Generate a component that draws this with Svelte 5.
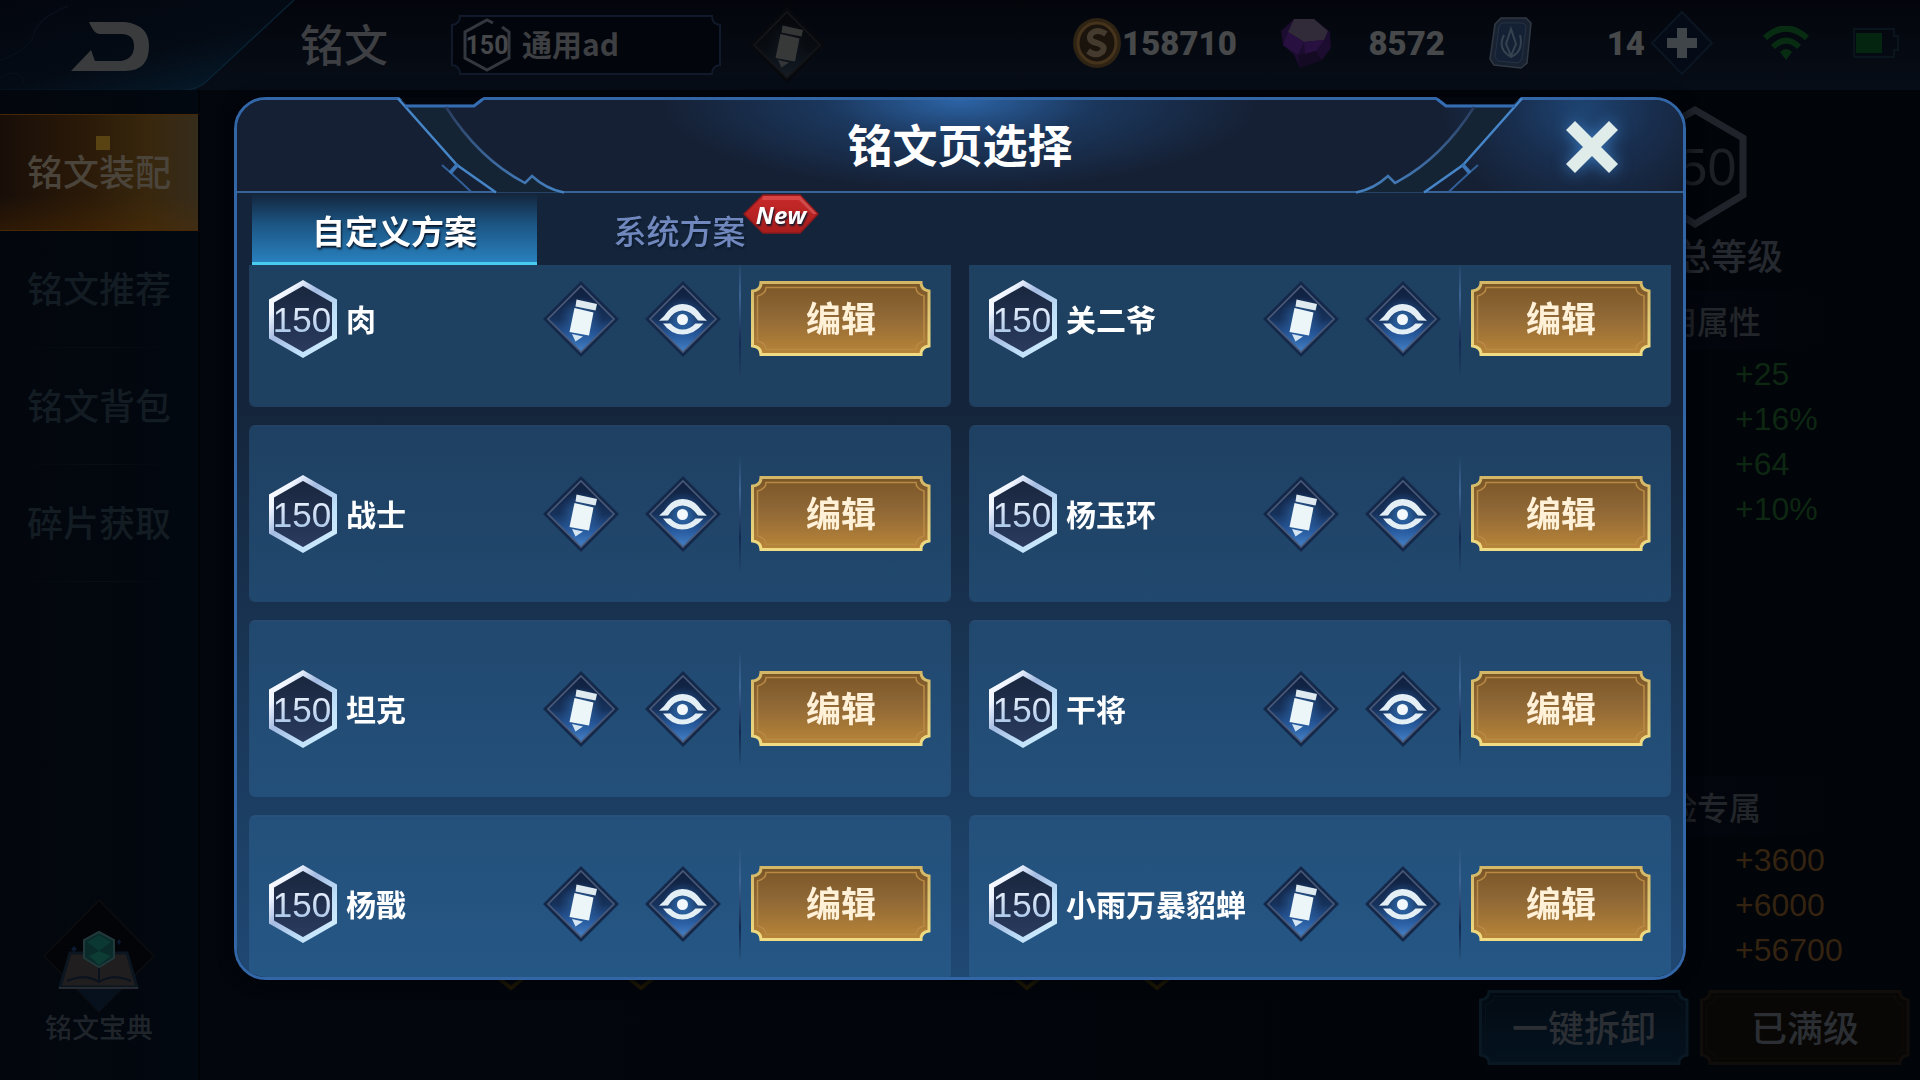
<script>
  import { onMount } from 'svelte';

  const sets = ['肉', '关二爷', '战士', '杨玉环', '坦克', '干将', '杨戬', '小雨万暴貂蝉'];
  const menu = ['铭文装配', '铭文推荐', '铭文背包', '碎片获取'];
  const common = ['+25', '+16%', '+64', '+10%'];
  const adventure = ['+3600', '+6000', '+56700'];

  let active = $state('custom');
  let list;

  onMount(() => {
    list.scrollTop = 35;
  });
</script>

{#snippet pencil()}
  <svg class="diamond" viewBox="0 0 76 76" aria-hidden="true">
    <path d="M38 0 76 38 38 76 0 38Z" fill="#14284a" />
    <path d="M38 5 71 38 38 71 5 38Z" fill="url(#gem)" stroke="#4a5a78" stroke-width="1.6" />
    <circle cx="38" cy="38" r="22" fill="url(#halo)" />
    <path d="M33.500 18.500 54 23 52.500 29.500 32.500 25.500Z" fill="#dfeaf0" />
    <path d="M31.500 27 50.500 31.500 46 54.500 26.500 51Z" fill="#ecf5f8" />
    <path d="M29 53 40 55.500 32.500 60.500Z" fill="#d5e6f2" />
  </svg>
{/snippet}

{#snippet eye()}
  <svg class="diamond" viewBox="0 0 76 76" aria-hidden="true">
    <path d="M38 0 76 38 38 76 0 38Z" fill="#14284a" />
    <path d="M38 5 71 38 38 71 5 38Z" fill="url(#gem)" stroke="#4a5a78" stroke-width="1.6" />
    <circle cx="38" cy="38" r="22" fill="url(#halo)" />
    <path d="M14 39.700Q19 36 23 30Q29 23 37.500 23Q47 23 53 30Q57 36 62 39.700L53 39.500Q46 29.500 37.500 29.500Q29 29.500 23 39.500Z" fill="#e3eef5" />
    <path d="M18 42.500H25.500Q31 48.500 37.500 48.500Q45 48.500 50.500 42.500H58.500Q49 53.500 37.500 53.500Q26 53.500 18 42.500Z" fill="#e3eef5" />
    <circle cx="37.500" cy="38.500" r="5.500" fill="#f2f8fb" />
  </svg>
{/snippet}

{#snippet plate(w, fill, edge, inner)}
  <svg class="plate" viewBox="0 0 {w} 75" preserveAspectRatio="none" aria-hidden="true">
    <path d="M10 1.500H{w - 10}Q{w - 10} 9 {w - 2} 10V65Q{w - 10} 66 {w - 10} 73.500H10Q10 66 1.500 65V10Q10 9 10 1.500Z" {fill} stroke={edge} stroke-width="3" />
    <path d="M15 6.500H{w - 15}Q{w - 15} 13 {w - 7} 15V60Q{w - 15} 62 {w - 15} 68.500H15Q15 62 6.500 60V15Q15 13 15 6.500Z" fill="none" stroke={inner} stroke-width="1.500" />
  </svg>
{/snippet}

{#snippet corner()}
  <path d="M164 -1H251L240 7.500H173Z" fill="#03060d" />
  <path d="M171 10H212Q245 62 291 86L298 79Q312 92 330 95.500H262L223 68Z" fill="#142434" />
  <path d="M164 1.500 223 68 262 95.500" fill="none" stroke="#4585c8" stroke-width="2.500" />
  <path d="M171 9H240L249 2" fill="none" stroke="#356db3" stroke-width="3" />
  <path d="M212 10Q245 62 291 86L298 79Q312 92 330 95.500" fill="none" stroke="url(#curve)" stroke-width="2.500" />
  <path d="M208 68 217 76 238 95.500" fill="none" stroke="#315f96" stroke-width="2" />
  <path d="M216 76 224 67" fill="none" stroke="#3d76b8" stroke-width="4" />
{/snippet}

<svg class="defs" aria-hidden="true">
  <defs>
    <linearGradient id="gem" x1="0" y1="0" x2="0" y2="1">
      <stop offset="0" stop-color="#101f3d" />
      <stop offset=".5" stop-color="#16315a" />
      <stop offset=".75" stop-color="#27599c" />
      <stop offset="1" stop-color="#4582c8" />
    </linearGradient>
    <radialGradient id="halo">
      <stop offset="0" stop-color="#3b82cc" stop-opacity=".8" />
      <stop offset="1" stop-color="#2b64a8" stop-opacity="0" />
    </radialGradient>
    <linearGradient id="rim" x1="0" y1="0" x2="1" y2="1">
      <stop offset="0" stop-color="#ffffff" />
      <stop offset=".2" stop-color="#f0f5ff" />
      <stop offset=".4" stop-color="#a5bbe2" />
      <stop offset=".7" stop-color="#bfe0fa" />
      <stop offset="1" stop-color="#d8f2ff" />
    </linearGradient>
    <linearGradient id="core" x1="0" y1="0" x2="0" y2="1">
      <stop offset="0" stop-color="#18253c" />
      <stop offset="1" stop-color="#2b3c60" />
    </linearGradient>
    <linearGradient id="digits" x1="0" y1="0" x2="0" y2="1">
      <stop offset="0" stop-color="#f6f8ff" />
      <stop offset="1" stop-color="#9fc0e6" />
    </linearGradient>
    <linearGradient id="goldplate" x1="0" y1="0" x2="0" y2="1">
      <stop offset="0" stop-color="#7a5526" />
      <stop offset=".45" stop-color="#8f6836" />
      <stop offset="1" stop-color="#b98538" />
    </linearGradient>
    <linearGradient id="goldedge" x1="0" y1="0" x2="0" y2="1">
      <stop offset="0" stop-color="#d3b766" />
      <stop offset="1" stop-color="#efdc84" />
    </linearGradient>
    <linearGradient id="tealplate" x1="0" y1="0" x2="0" y2="1">
      <stop offset="0" stop-color="#030a12" />
      <stop offset="1" stop-color="#041320" />
    </linearGradient>
    <linearGradient id="curve" x1="0" y1="0" x2="0" y2="1">
      <stop offset="0" stop-color="#2a3c5c" />
      <stop offset="1" stop-color="#4580c0" />
    </linearGradient>
    <linearGradient id="nook" x1="0" y1="0" x2="0.8" y2="1">
      <stop offset="0" stop-color="#03060e" />
      <stop offset=".6" stop-color="#040b15" />
      <stop offset="1" stop-color="#061a2a" />
    </linearGradient>
    <linearGradient id="badge" x1="0" y1="0" x2="0" y2="1">
      <stop offset="0" stop-color="#c92a2a" />
      <stop offset="1" stop-color="#a81c1c" />
    </linearGradient>
  </defs>
</svg>

<div class="scene">
  <header class="topbar">
    <button class="back" aria-label="返回">
      <svg width="300" height="92" viewBox="0 0 300 92">
        <path d="M0 0H294L208 80Q198 90.500 180 90.500H0Z" fill="url(#nook)" />
        <path d="M294 0 208 80Q198 90.500 180 90.500H0" fill="none" stroke="#092233" stroke-width="1.500" />
        <path d="M0 60Q30 50 34 34T68 6M0 78Q20 66 24 84" fill="none" stroke="#070e18" stroke-width="2" />
        <path d="M89 22H125Q149 25 149 46Q149 71 125 71H71L91 50 95 61H121Q134 59 134 46Q134 34 121 34H99Q94 34 89 22Z" fill="#393b3d" />
      </svg>
    </button>
    <h1>铭文</h1>
    <button class="current">
      <svg class="frame" viewBox="0 0 270 60" preserveAspectRatio="none" aria-hidden="true">
        <path d="M9 1H261Q261 9 269 10V50Q261 51 261 59H9Q9 51 1 50V10Q9 9 9 1Z" fill="#02050b" stroke="#111a2b" stroke-width="2" />
      </svg>
      <svg class="mini" viewBox="0 0 50 54" aria-hidden="true">
        <path d="M31 5 25 2 3 14V40L25 52 47 40V14L40 9" fill="none" stroke="#33373f" stroke-width="3" />
        <text x="25" y="36" text-anchor="middle" class="mini-num">150</text>
      </svg>
      <span>通用ad</span>
    </button>
    <button class="dim rename" aria-label="重命名">{@render pencil()}</button>

    <div class="wallet">
      <svg width="50" height="52" viewBox="0 0 50 52" aria-hidden="true">
        <ellipse cx="25" cy="26" rx="24" ry="25" fill="#2f2314" />
        <ellipse cx="25" cy="26" rx="19" ry="20" fill="#1b140d" stroke="#45331c" stroke-width="3" />
        <path d="M34 17Q25 11 19 17Q15 24 25 26Q35 29 30 35Q24 40 16 34" fill="none" stroke="#443a2e" stroke-width="6" />
      </svg>
      <span class="gold-count">158710</span>
      <svg class="gap" width="52" height="52" viewBox="0 0 52 52" aria-hidden="true">
        <path d="M1 14 14 2 34 2 50 15 51 31 42 43 20 51 14 38 3 28Z" fill="#1c0c2f" />
        <path d="M14 2 34 2 48 14 44 23 24 25 8 15Z" fill="#302a39" />
        <path d="M3 28 8 15 24 25 18 38ZM24 25 44 23 36 34 25 37Z" fill="#281040" />
        <path d="M18 38 25 37 36 34 42 43 20 51Z" fill="#150a24" />
      </svg>
      <span class="gem-count">8572</span>
      <svg class="gap" width="43" height="52" viewBox="0 0 43 52" aria-hidden="true">
        <path d="M12 1H37L42 6 38 46 32 51 5 48 1 42 6 7Z" fill="#182231" stroke="#303944" stroke-width="1.500" />
        <path d="M13 6H34L37 9 33 42 29 46 9 44 6 40 10 9Z" fill="#142033" stroke="#253345" />
        <path d="M22 12 27 27 22 39 17 27ZM15 18Q8 32 22 40Q35 34 31 18" fill="none" stroke="#35424f" stroke-width="2" />
      </svg>
      <span class="card-count">14</span>
      <button class="add" aria-label="增加">
        <svg width="62" height="64" viewBox="0 0 62 64">
          <path d="M31 1 61 32 31 63 1 32Z" fill="#040b16" stroke="#0b1622" stroke-width="2" />
          <path d="M26 17H36V27H46V37H36V47H26V37H16V27H26Z" fill="#404549" />
        </svg>
      </button>
      <svg class="wifi" width="46" height="34" viewBox="0 0 46 34" aria-label="无线网络">
        <path d="M2 12Q23 -7 44 12" fill="none" stroke="#082c11" stroke-width="6" />
        <path d="M10 21Q23 8 36 21" fill="none" stroke="#082c11" stroke-width="6" />
        <path d="M17 26Q23 20 29 26L23 34Z" fill="#082c11" />
      </svg>
      <svg class="battery" width="46" height="30" viewBox="0 0 46 30" aria-label="电量">
        <path d="M1 1H41V8H45V22H41V29H1Z" fill="none" stroke="#0a141c" stroke-width="2" />
        <path d="M3 5H29V25H3Z" fill="#042610" />
      </svg>
    </div>
  </header>

  <div class="body">
    <nav class="side">
      <ul>
        {#each menu as item, i}
          <li><a href="#{i}" class:on={i === 0}>{item}</a></li>
        {/each}
      </ul>
      <a class="codex" href="#codex">
        <svg width="112" height="114" viewBox="0 0 112 114" aria-hidden="true">
          <path d="M56 1 111 57 56 113 1 57Z" fill="#020408" stroke="#0b0c0f" stroke-width="2" />
          <path d="M30 86 56 113 82 86Z" fill="#06111d" />
          <path d="M27 54H84L94 88H17Z" fill="#201e1e" stroke="#0c1620" stroke-width="3" />
          <path d="M56 68V83M24 82Q42 74 56 83Q70 74 88 82" fill="none" stroke="#09121e" stroke-width="2" />
          <path d="M16 89H95" stroke="#272b31" stroke-width="2" />
          <path d="M56 33 71 41V59L56 68 41 59V41Z" fill="#0a2b29" stroke="#22393c" stroke-width="2" />
          <path d="M56 36 68 43 56 52 44 43Z" fill="#0c3833" />
          <path d="M56 52 68 57 56 66 46 57Z" fill="#0d3c35" />
          <path d="M31 47 34 50 31 53 28 50ZM76 40 78 43 76 46 74 43Z" fill="#0b1a30" />
        </svg>
        <span>铭文宝典</span>
      </a>
    </nav>

    <main>
      {#each ['left', 'right'] as side}
        <svg class="slots" width="164" height="24" viewBox="0 0 164 24" aria-hidden="true">
          <path d="M2 5 17 17 32 5M132 5 147 17 162 5" fill="none" stroke="#1f1803" stroke-width="4" />
        </svg>
      {/each}
    </main>

    <aside>
      <svg class="total" width="108" height="122" viewBox="0 0 108 122" aria-hidden="true">
        <path d="M54 4 102 32V89L54 118 6 89V32Z" fill="none" stroke="#20242a" stroke-width="7" />
        <text x="52" y="79" text-anchor="middle" class="total-num">150</text>
      </svg>
      <p class="caption">总等级</p>
      <h2>用属性</h2>
      <ul class="green">
        {#each common as v}<li>{v}</li>{/each}
      </ul>
      <h2 class="second">险专属</h2>
      <ul class="amber">
        {#each adventure as v}<li>{v}</li>{/each}
      </ul>
      <div class="actions">
        <button class="act">{@render plate(210, 'url(#tealplate)', '#0a1823', '#07111a')}<span>一键拆卸</span></button>
        <button class="act">{@render plate(210, '#090705', '#100d0a', '#0d0a07')}<span>已满级</span></button>
      </div>
    </aside>
  </div>
</div>

<div class="overlay">
  <section class="dialog" role="dialog" aria-labelledby="dialog-title">
    <div class="head">
      <h2 id="dialog-title">铭文页选择</h2>
      <button class="close" aria-label="关闭">
        <svg width="60" height="60" viewBox="0 0 60 60">
          <path d="M13 4 30 21 47 4 56 13 39 30 56 47 47 56 30 39 13 56 4 47 21 30 4 13Z" fill="#e0ece9" />
        </svg>
      </button>
    </div>
    <svg class="trim" width="350" height="97" viewBox="0 0 350 97" aria-hidden="true">{@render corner()}</svg>
    <svg class="trim flip" width="350" height="97" viewBox="0 0 350 97" aria-hidden="true">{@render corner()}</svg>

    <div class="tabs" role="tablist">
      <button role="tab" class:on={active === 'custom'} aria-selected={active === 'custom'} onclick={() => (active = 'custom')}>自定义方案</button>
      <button role="tab" class:on={active === 'system'} aria-selected={active === 'system'} onclick={() => (active = 'system')}>
        系统方案
        <span class="new">
          <svg viewBox="0 0 76 40" aria-hidden="true">
            <path d="M20 1H57L75 20 57 39H20L1 20Z" fill="url(#badge)" stroke="#8e1a1c" stroke-width="1.500" />
            <path d="M20 2H57L60 6H19Z" fill="#d94444" />
            <path d="M57 2 74 20 70 20 56 6Z" fill="#cf4a4a" />
          </svg>
          <b>New</b>
        </span>
      </button>
    </div>

    <div class="list" bind:this={list}>
      {#each sets as name}
        <article class="card">
          <svg class="hex" viewBox="0 0 68 78" aria-hidden="true">
            <path d="M34 3 65.500 21V57L34 75 2.500 57V21Z" fill="url(#core)" stroke="url(#rim)" stroke-width="5" />
            <text x="33" y="52" text-anchor="middle" class="hex-num">150</text>
          </svg>
          <h3>{name}</h3>
          <button class="icon" aria-label="重命名">{@render pencil()}</button>
          <button class="icon" aria-label="查看">{@render eye()}</button>
          <i class="rule"></i>
          <button class="edit">{@render plate(180, 'url(#goldplate)', 'url(#goldedge)', '#b98a45')}<span>编辑</span></button>
        </article>
      {/each}
    </div>
  </section>
</div>

<style>
  :global(body) {
    background: #02060c;
    font-family: 'Noto Sans CJK SC', sans-serif;
    overflow: hidden;
  }
  button {
    border: 0;
    padding: 0;
    background: none;
    font: inherit;
    color: inherit;
    cursor: pointer;
  }
  h1, h2, h3, p, ul {
    margin: 0;
    padding: 0;
    list-style: none;
  }
  a {
    text-decoration: none;
    color: inherit;
  }
  svg {
    display: block;
    flex: none;
  }
  .defs {
    position: absolute;
    width: 0;
    height: 0;
  }
  .scene {
    min-height: 100vh;
    display: flex;
    flex-direction: column;
    background: linear-gradient(90deg, #03060d, #02050b 40%, #010408);
  }

  .topbar {
    height: 90px;
    display: flex;
    align-items: center;
    background: linear-gradient(#03050b, #070d17);
    color: #3d3f42;
  }
  .back {
    align-self: flex-start;
  }
  h1 {
    font-size: 44px;
    line-height: 60px;
    font-weight: 500;
    width: 151px;
    padding-bottom: 4px;
  }
  .current {
    position: relative;
    display: flex;
    align-items: center;
    gap: 10px;
    width: 270px;
    height: 60px;
    padding-left: 11px;
    font-size: 30px;
    font-weight: 700;
  }
  .current span {
    position: relative;
    padding-bottom: 4px;
  }
  .frame, .plate {
    position: absolute;
    inset: 0;
    width: 100%;
    height: 100%;
  }
  .mini {
    position: relative;
    width: 50px;
    height: 54px;
  }
  .mini-num {
    font: 700 25px Roboto, sans-serif;
    fill: #45474a;
  }
  .rename {
    margin-left: 28px;
  }
  .dim {
    filter: grayscale(0.5) brightness(0.23);
  }
  .diamond {
    width: 76px;
    height: 76px;
  }
  .wallet {
    flex: 1;
    display: flex;
    align-items: center;
    justify-content: flex-end;
    padding: 0 21px 4px 0;
    font: 900 33px Roboto, sans-serif;
    color: #46484a;
  }
  .gap {
    margin-left: 44px;
  }
  .gold-count {
    width: 114px;
    text-align: right;
  }
  .gem-count, .card-count {
    width: 113px;
    text-align: right;
  }
  .add {
    margin-left: 6px;
  }
  .wifi {
    margin-left: 50px;
  }
  .battery {
    margin-left: 44px;
  }

  .body {
    flex: 1;
    display: flex;
  }
  .side {
    width: 198px;
    padding-top: 24px;
    display: flex;
    flex-direction: column;
    justify-content: space-between;
    background: linear-gradient(90deg, #03060d, #020810);
    border-right: 2px solid #010307;
  }
  .side li a {
    display: flex;
    align-items: center;
    justify-content: center;
    box-sizing: border-box;
    height: 117px;
    padding-bottom: 6px;
    font-size: 36px;
    font-weight: 500;
    color: #131c22;
    background: linear-gradient(90deg, transparent 10%, #090e15 50%, transparent 90%) bottom / 100% 1px no-repeat;
  }
  .side li a.on {
    color: #4a443b;
    background:
      linear-gradient(#5a4312, #5a4312) 96px 21px / 14px 14px no-repeat,
      linear-gradient(transparent 70%, rgba(90, 48, 0, 0.3)),
      linear-gradient(90deg, #180e08, #2b1a08 45%, #38270d 75%, #362c1b);
    border-block: 1px solid #472806;
  }
  .codex {
    display: flex;
    flex-direction: column;
    align-items: center;
    padding-bottom: 39px;
    font-size: 27px;
    line-height: 28px;
    font-weight: 500;
    color: #1f242a;
  }
  main {
    flex: 1;
    display: flex;
    align-items: flex-end;
    justify-content: flex-start;
    gap: 352px;
    padding: 0 0 85px 294px;
  }
  aside {
    width: 441px;
    box-sizing: border-box;
    padding: 16px 10px 15px 0;
    display: flex;
    flex-direction: column;
  }
  .total {
    margin-left: 162px;
  }
  .total-num {
    font: 400 52px 'Liberation Sans', sans-serif;
    fill: #1d2025;
  }
  .caption {
    margin-left: 196px;
    font-size: 36px;
    line-height: 52px;
    padding-bottom: 6px;
    font-weight: 500;
    color: #25292f;
  }
  aside h2 {
    margin: 4px 0 0 160px;
    padding-left: 26px;
    font-size: 32px;
    line-height: 60px;
    font-weight: 500;
    color: #222529;
    background: linear-gradient(90deg, #04060e, transparent 90%);
  }
  aside ul {
    margin: 2px 0 0 256px;
    font: 400 32px/45px 'Liberation Sans', sans-serif;
  }
  .green {
    color: #0d2712;
  }
  .amber {
    color: #332310;
  }
  aside .second {
    margin-top: auto;
  }
  .actions {
    display: flex;
    gap: 11px;
    margin-top: 17px;
  }
  .act {
    position: relative;
    width: 210px;
    height: 75px;
    padding-bottom: 4px;
    font-size: 36px;
    font-weight: 500;
    color: #2b2f34;
  }
  .act span, .edit span {
    position: relative;
  }

  .overlay {
    position: fixed;
    inset: 0;
    padding: 97px 234px 100px;
    display: flex;
  }
  .dialog {
    flex: 1;
    position: relative;
    display: flex;
    flex-direction: column;
    box-sizing: border-box;
    border: 3px solid #3266a6;
    border-radius: 32px;
    background: linear-gradient(#14243a, #14253b 35%, #1f4873) padding-box;
    box-shadow: 0 0 16px #01040a;
    color: #fff;
  }
  .head {
    height: 91px;
    flex: none;
    display: flex;
    align-items: center;
    justify-content: center;
    border-bottom: 2px solid #386397;
    border-radius: 29px 29px 0 0;
    background:
      radial-gradient(ellipse 300px 90px at 50% 0, #2c64a6, rgba(32, 74, 126, 0.55) 45%, transparent),
      radial-gradient(ellipse 140px 110px at 93% 10%, #1e4472, rgba(28, 60, 105, 0.5) 50%, transparent),
      #152034;
  }
  .head h2 {
    font-size: 45px;
    line-height: 60px;
    padding-bottom: 4px;
    font-weight: 700;
  }
  .close {
    position: absolute;
    right: 61px;
    top: 17px;
    filter: drop-shadow(0 0 8px #3877bb);
  }
  .trim {
    position: absolute;
    left: -3px;
    top: -3px;
    pointer-events: none;
  }
  .flip {
    left: auto;
    right: -3px;
    transform: scaleX(-1);
  }
  .tabs {
    display: flex;
    padding-left: 15px;
    height: 72px;
    flex: none;
  }
  .tabs button {
    position: relative;
    box-sizing: border-box;
    width: 285px;
    padding-top: 4px;
    border-bottom: 3px solid transparent;
    font-size: 33px;
    line-height: 48px;
    font-weight: 500;
    color: #7088bd;
    text-shadow: 1px 2px 2px #0c1a2d;
  }
  .tabs .on {
    color: #fff;
    font-weight: 700;
    background: linear-gradient(transparent, #1c5583 45%, #2880bd);
    border-bottom-color: #48cdf0;
  }
  .new {
    position: absolute;
    left: 206px;
    top: 1px;
    width: 76px;
    height: 40px;
    display: flex;
    align-items: center;
    justify-content: center;
    color: #fff;
  }
  .new svg {
    position: absolute;
    inset: 0;
  }
  .new b {
    position: relative;
    font: italic 700 24px 'Open Sans', sans-serif;
  }
  .list {
    flex: 1;
    min-height: 0;
    overflow-y: auto;
    scrollbar-width: none;
    display: grid;
    grid-template-columns: 1fr 1fr;
    gap: 18px;
    padding: 0 12px;
    border-radius: 0 0 29px 29px;
  }
  .card {
    height: 177px;
    box-sizing: border-box;
    display: flex;
    align-items: center;
    padding: 0 19px 1px;
    border: 1px solid rgba(60, 110, 160, 0.35);
    border-top: 2px solid rgba(60, 110, 160, 0.4);
    border-radius: 6px;
    background: rgba(50, 114, 165, 0.36) padding-box;
  }
  .hex {
    width: 68px;
    height: 78px;
  }
  .hex-num {
    font: 400 35px 'Liberation Sans', sans-serif;
    fill: url(#digits);
  }
  h3 {
    flex: 1;
    margin-left: 9px;
    padding-bottom: 2px;
    font-size: 30px;
    line-height: 40px;
    font-weight: 700;
    white-space: nowrap;
  }
  .icon + .icon {
    margin-left: 26px;
  }
  .rule {
    width: 2px;
    height: 116px;
    margin: 0 10px 0 18px;
    background: linear-gradient(transparent, #3e6494 30%, #142a50 70%, transparent);
  }
  .edit {
    position: relative;
    width: 180px;
    height: 75px;
    padding-bottom: 4px;
    font-size: 35px;
    font-weight: 700;
    color: #fff0d8;
  }
</style>
